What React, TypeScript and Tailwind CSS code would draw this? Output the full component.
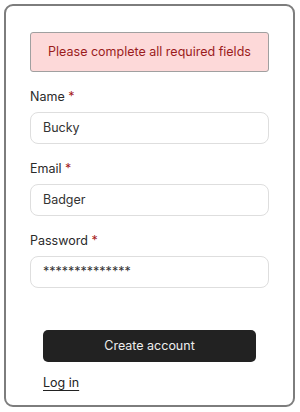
import React from 'react';

const FONT = { fontFamily: 'Inter, "Noto Sans", sans-serif' };

function Field({ label, value }: { label: string; value: string }) {
  return (
    <div className="flex flex-col mt-[15px]">
      <label className="text-[12.5px] leading-[20px] text-[#2a2a2a]">
        {label} <span className="text-[#a61b1b]">*</span>
      </label>
      <div className="mt-[5px] h-[32px] rounded-[8px] border border-[#dedede] bg-white px-[12px] flex items-center text-[12.5px] text-[#333]">
        {value}
      </div>
    </div>
  );
}

export default function App() {
  return (
    <div className="w-[300px] h-[412px] bg-white p-[4px]" style={FONT}>
      <div className="h-[403px] w-[291px] rounded-[9px] border-2 border-[#7d7d7d] px-[24px] pt-[26px] flex flex-col">
        <div className="h-[40px] rounded-[3px] border border-[#a0a0a0] bg-[#fdd9d9] flex items-center justify-center text-[12.5px] text-[#9b1c1c]">
          Please complete all required fields
        </div>
        <Field label="Name" value="Bucky" />
        <Field label="Email" value="Badger" />
        <Field label="Password" value="**************" />
        <div className="px-[13px] mt-[42px]">
          <button className="w-full h-[32px] rounded-[5px] bg-[#222] text-[#eee] text-[12.5px]">
            Create account
          </button>
          <div className="mt-[11px] text-[12.5px] leading-[20px] text-[#222]">
            <a className="underline underline-offset-[3px]">Log in</a>
          </div>
        </div>
      </div>
    </div>
  );
}
